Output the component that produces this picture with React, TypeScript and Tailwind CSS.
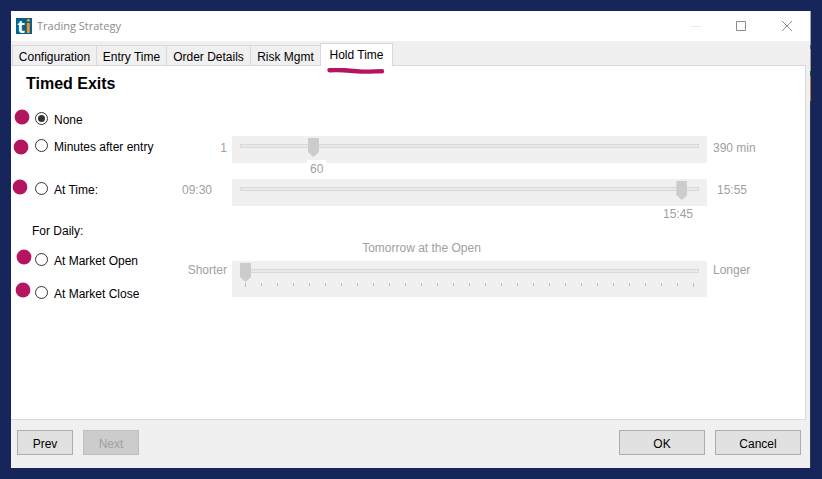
import { useState } from "react";
import clsx from "clsx";

const TABS = [
  { name: "Configuration", width: "w-[84px]" },
  { name: "Entry Time",    width: "w-[70px]" },
  { name: "Order Details", width: "w-[84px]" },
  { name: "Risk Mgmt",     width: "w-[70px]" },
  { name: "Hold Time",     width: "w-[73px]" },
];

// marker dots in the left margin, relative to the tab panel
const MARKS = [
  { x: 11, y: 51 },
  { x: 10, y: 81 },
  { x: 9,  y: 121 },
  { x: 13, y: 191 },
  { x: 12, y: 224 },
];

const RANGE =
  "block w-full h-4 appearance-none bg-transparent " +
  "[&::-webkit-slider-runnable-track]:h-1 [&::-webkit-slider-runnable-track]:bg-[#e7eaea] " +
  "[&::-webkit-slider-runnable-track]:shadow-[inset_0_0_0_1px_#d6dada] " +
  "[&::-webkit-slider-thumb]:appearance-none [&::-webkit-slider-thumb]:-mt-1.5 " +
  "[&::-webkit-slider-thumb]:h-[19px] [&::-webkit-slider-thumb]:w-[11px] [&::-webkit-slider-thumb]:bg-[#cccccc] " +
  "[&::-webkit-slider-thumb]:[clip-path:polygon(0_0,100%_0,100%_74%,50%_100%,0_74%)]";

function Logo() {
  return (
    <div className="flex h-4 w-4 items-center justify-center bg-[#04628f] font-['Open_Sans',sans-serif] text-[18px] leading-4 font-bold">
      <span className="text-white">t</span>
      <span className="text-[#f7941d]">i</span>
    </div>
  );
}

function TitleBar() {
  return (
    <header className="flex h-[30px] items-center bg-white pl-[5px]">
      <Logo />
      <h1 className="ml-[5px] flex-1 font-['Open_Sans',sans-serif] text-[11px] leading-4 text-[#8c8c8c]">Trading Strategy</h1>
      <button aria-label="Minimize" disabled className="flex h-full w-[45px] items-center justify-center">
        <svg width="10" height="10" viewBox="0 0 10 10" stroke="#e8e8e8"><path d="M0 5.5H10" /></svg>
      </button>
      <button aria-label="Maximize" className="flex h-full w-[46px] items-center justify-center">
        <svg width="10" height="10" viewBox="0 0 10 10" fill="none" stroke="#8c8c8c"><path d="M.5 .5H9.5V9.5H.5Z" /></svg>
      </button>
      <button aria-label="Close" className="flex h-full w-[46px] items-center justify-center">
        <svg width="10" height="10" viewBox="0 0 10 10" stroke="#8c8c8c"><path d="M0 0L10 10M10 0L0 10" /></svg>
      </button>
    </header>
  );
}

type RadioProps = { label: string; value: string; selected: string; onSelect: (v: string) => void };

function Radio({ label, value, selected, onSelect }: RadioProps) {
  return (
    <label className="flex h-5 items-start gap-1.5">
      <input
        type="radio"
        name="exit"
        checked={selected === value}
        onChange={() => onSelect(value)}
        className="mt-[3px] h-[13px] w-[13px] appearance-none rounded-full border border-[#333333] bg-white checked:bg-[#333333] checked:bg-clip-content checked:p-[2px]"
      />
      <span className="pt-[3px]">{label}</span>
    </label>
  );
}

type SliderProps = { label: string; min: number; max: number; value: number; ticks?: number };

function Slider({ label, min, max, value, ticks }: SliderProps) {
  return (
    <div className={clsx("bg-[#f0f0f0] px-2 pt-0.5", ticks ? "h-9" : "h-[27px]")}>
      <input type="range" aria-label={label} min={min} max={max} defaultValue={value} disabled className={RANGE} />
      {ticks && (
        <div className="mt-1 flex justify-between px-[5px]">
          {Array.from({ length: ticks }, (_, i) => (
            <span key={i} className="h-[3px] w-px bg-[#bcbcbc] first:h-1 last:h-1" />
          ))}
        </div>
      )}
    </div>
  );
}

function DialogButton({ children, wide, disabled }: { children: string; wide?: boolean; disabled?: boolean }) {
  return (
    <button
      disabled={disabled}
      className={clsx(
        "h-[25px] border pt-0.5 leading-4",
        wide ? "w-[86px]" : "w-14",
        disabled ? "border-[#bfbfbf] bg-[#cccccc] text-[#a0a0a0]" : "border-[#adadad] bg-[#e1e1e1]",
      )}
    >
      {children}
    </button>
  );
}

export default function App() {
  const [tab, setTab] = useState("Hold Time");
  const [exit, setExit] = useState("none");

  return (
    <div className="flex min-h-screen bg-[#16265a] p-[11px] font-['Liberation_Sans',Arial,sans-serif] text-[12px] leading-4 text-black">
      <main className="flex flex-1 flex-col bg-[#f0f0f0]">
        <TitleBar />

        <div role="tablist" className="relative z-10 flex h-[25px] items-end pl-px">
          {TABS.map(({ name, width }) => (
            <button
              key={name}
              role="tab"
              aria-selected={name === tab}
              onClick={() => setTab(name)}
              className={clsx(
                "border-[#d9d9d9]",
                width,
                name === tab ? "relative h-[23px] border-x border-t bg-white" : "h-[21px] border-y border-l pt-0.5",
              )}
            >
              {name}
              {name === tab && (
                <svg className="absolute top-6 left-1.5" width="58" height="6" viewBox="0 0 58 6" fill="none">
                  <path d="M2.5 2.2C18 1 24 3.6 35 3.6C44 3.8 49 3.2 55 3.2" stroke="#b5155f" strokeWidth="4.4" strokeLinecap="round" />
                </svg>
              )}
            </button>
          ))}
        </div>

        <section role="tabpanel" className="relative -mt-px mr-1 flex-1 border-y border-r border-[#d9d9d9] bg-white">
          <h2 className="mt-2 pl-[15px] text-[16px] leading-5 font-bold">Timed Exits</h2>

          <div className="mt-[15px] pl-6">
            <Radio label="None" value="none" selected={exit} onSelect={setExit} />
          </div>

          {/* intraday exits */}
          <div className="mt-[7px] grid grid-cols-[221px_1fr_98px]">
            <div className="flex justify-between pr-[5px] pl-6">
              <Radio label="Minutes after entry" value="minutes" selected={exit} onSelect={setExit} />
              <span className="pt-1 text-[#a0a0a0]">1</span>
            </div>
            <div className="relative">
              <Slider label="Minutes after entry" min={1} max={390} value={60} />
              <output className="absolute top-6 left-[75px] bg-white px-[3px] pt-px text-[#a0a0a0]">60</output>
            </div>
            <span className="pt-1 pl-1.5 text-[#a0a0a0]">390 min</span>
          </div>
          <div className="mt-4 grid grid-cols-[221px_1fr_98px]">
            <div className="flex justify-between pr-5 pl-6">
              <Radio label="At Time:" value="time" selected={exit} onSelect={setExit} />
              <span className="pt-[3px] text-[#a0a0a0]">09:30</span>
            </div>
            <div className="relative">
              <Slider label="At Time" min={570} max={955} value={945} />
              <output className="absolute top-[27px] right-3.5 text-[#a0a0a0]">15:45</output>
            </div>
            <span className="pt-[3px] pl-2.5 text-[#a0a0a0]">15:55</span>
          </div>

          {/* daily exits */}
          <div className="mt-[15px] grid grid-cols-[221px_1fr_98px]">
            <div className="flex justify-between pr-[5px]">
              <div>
                <h3 className="pt-0.5 pl-[21px]">For Daily:</h3>
                <div className="mt-[11px] flex flex-col gap-[13px] pl-6">
                  <Radio label="At Market Open" value="open" selected={exit} onSelect={setExit} />
                  <Radio label="At Market Close" value="close" selected={exit} onSelect={setExit} />
                </div>
              </div>
              <span className="pt-[41px] text-[#a0a0a0]">Shorter</span>
            </div>
            <div className="pt-[19px]">
              <p className="mb-[5px] pr-24 text-center text-[#a0a0a0]">Tomorrow at the Open</p>
              <Slider label="Days to hold" min={0} max={28} value={0} ticks={29} />
            </div>
            <span className="pt-[41px] pl-1.5 text-[#a0a0a0]">Longer</span>
          </div>

          <svg className="pointer-events-none absolute top-0 left-0" width="24" height="240" fill="#b5155f">
            {MARKS.map((m) => (
              <circle key={m.y} cx={m.x} cy={m.y} r="7.4" />
            ))}
          </svg>
        </section>

        <footer className="flex gap-2.5 pt-2.5 pr-[9px] pb-[13px] pl-1.5">
          <DialogButton>Prev</DialogButton>
          <DialogButton disabled>Next</DialogButton>
          <div className="flex-1" />
          <DialogButton wide>OK</DialogButton>
          <DialogButton wide>Cancel</DialogButton>
        </footer>
      </main>
      {/* sliver of the window behind the dialog */}
      <div className="w-px bg-[linear-gradient(#a3a3a3_34px,#3c6478_34px_38px,#a89b84_38px_60px,#17612a_60px_65px,#b07a35_65px_90px,#2f3b45_90px)]" />
    </div>
  );
}
